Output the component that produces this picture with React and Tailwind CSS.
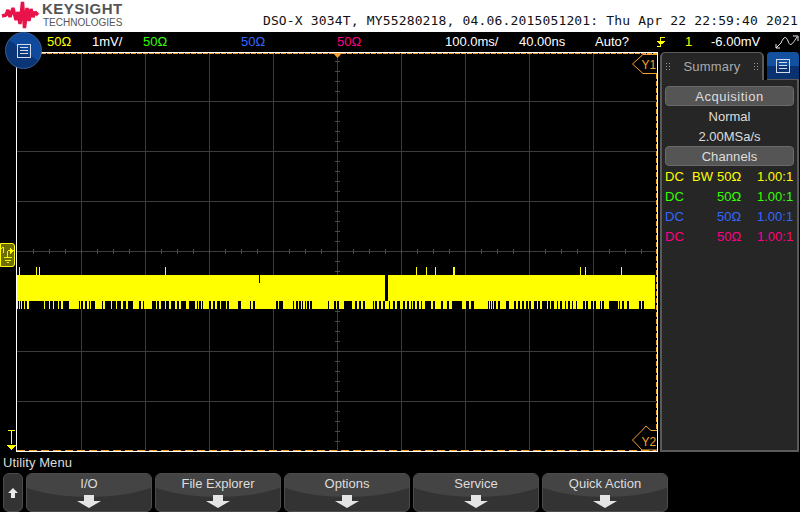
const gapsA = [[5,10],[13,16],[19,24],[28,32],[40,85],[88,98],[103,110],[113,127],[130,135],[140,160],[190,193],[196,202],[206,214],[218,222],[226,238],[258,262],[266,285],[289,300],[304,315],[320,330],[336,352],[370,374],[380,385],[408,420],[423,430],[434,446],[450,460],[464,478],[482,490],[494,510],[518,538],[542,546],[550,554],[558,562],[580,585],[590,598],[602,612],[616,630],[634,640]];
const gapsB = [[24,34],[60,64],[70,76],[138,143],[148,158],[190,193],[197,203],[208,213],[216,220],[224,228],[232,236],[240,245],[295,298],[312,318],[322,328],[342,350],[352,366],[376,382],[388,392],[398,406],[428,432],[436,442],[448,454],[458,464],[476,480],[490,496],[502,510],[518,524],[530,536],[542,546],[550,556],[560,568],[572,576],[586,602],[610,614],[632,640]];
const gapsC = [[-69,-63],[-54,-24],[-12,-3],[3,12],[54,57],[60,63],[66,69],[72,78],[84,90],[108,117],[132,138],[144,150],[156,162],[168,174],[178,183],[192,201],[204,210],[216,231],[234,240],[243,252],[262,264],[270,276],[285,288],[294,300],[306,309],[318,321],[339,345],[348,354],[363,369],[372,378],[390,393],[396,402],[417,444],[447,450],[456,462],[471,477],[507,513],[516,522]];

const toReal = (list, x0) => list.map(([a, b]) => [x0 + a / 3, (b - a) / 3]);
const gaps = [...toReal(gapsA, 16), ...toReal(gapsB, 230), ...toReal(gapsC, 470)];
const spikes = [[19,1],[36,1],[39,1],[165,1],[416,1],[426,1],[435,1],[453,2],[580,1],[585,1],[621,1]];
const vLines = [81,145,209,273,337,401,465,529,593];
const hLines = [101,151,201,251,301,351,401];
const xTicks = Array.from({ length: 39 }, (_, i) => 33 + i * 16);
const yTicks = Array.from({ length: 39 }, (_, i) => 61 + i * 10);

function Plot() {
  return (
    <svg width="642" height="400" viewBox="16 52 642 400" shapeRendering="crispEdges" className="block">
      {vLines.map((x) => <rect key={x} x={x} y="52" width="1" height="399" fill="#3c3c3c" />)}
      {hLines.map((y) => <rect key={y} x="17" y={y} width="640" height="1" fill="#3c3c3c" />)}
      {xTicks.map((x) => <rect key={x} x={x} y="249" width="1" height="5" fill="#4a4a4a" />)}
      {yTicks.map((y) => <rect key={y} x="335" y={y} width="5" height="1" fill="#4a4a4a" />)}

      {/* trace */}
      <rect x="17" y="275" width="638" height="34" fill="#ffff00" />
      {gaps.map(([x, w], i) => <rect key={i} x={x} y="301" width={w} height="8" fill="#000" />)}
      {spikes.map(([x, w]) => <rect key={x} x={x} y="267" width={w} height="8" fill="#ffff00" />)}
      <rect x="385" y="275" width="3" height="26" fill="#000" />
      <rect x="259" y="275" width="1" height="8" fill="#000" />

      {/* frame */}
      <rect x="16" y="52" width="642" height="1" fill="#fff" />
      <rect x="16" y="451" width="642" height="1" fill="#fff" />
      <rect x="16" y="52" width="1" height="400" fill="#fff" />
      <rect x="657" y="52" width="1" height="400" fill="#fff" />
      <line x1="17" y1="53.5" x2="656" y2="53.5" stroke="#f7a030" strokeDasharray="5 1" />
      <line x1="17" y1="450.5" x2="656" y2="450.5" stroke="#f7a030" strokeDasharray="8 4" />
      <line x1="656.5" y1="53" x2="656.5" y2="450" stroke="#f7a030" strokeDasharray="5 2" />

      {/* time reference */}
      <polygon points="333,53 342,53 337.5,58" fill="#f7a030" shapeRendering="auto" />

      {/* Y cursors */}
      <g shapeRendering="auto" fill="none" stroke="#f7a030">
        <path d="M657 54.5 H643 L632.5 64 L643 73.5 H657" fill="#000" />
        <path d="M657 430.5 H651 L646 426 L642 430.5 L632.5 440 L642 450 H657" fill="#000" />
      </g>
      <text x="641.5" y="69" fontSize="12" fill="#f7a030" fontFamily="Liberation Sans, sans-serif">Y1</text>
      <text x="641.5" y="446" fontSize="12" fill="#f7a030" fontFamily="Liberation Sans, sans-serif">Y2</text>
    </svg>
  );
}

function Logo() {
  return (
    <svg width="38" height="30" viewBox="0 0 38 30" className="shrink-0">
      <path d="M1 16 L5 15 L7 10 L9 17 L12 8 L15 20 L17 12 L19 24 L21.5 2 L23.5 28 L26 8 L28 21 L30 9 L32 17 L34 12 L37 15" fill="none" stroke="#e8134b" strokeWidth="3.4" strokeLinejoin="bevel" />
    </svg>
  );
}

function MenuGlyph() {
  return (
    <svg width="14" height="14" viewBox="0 0 14 14" shapeRendering="crispEdges">
      <rect x="0.5" y="0.5" width="13" height="13" fill="none" stroke="#d4dbe8" />
      <rect x="3" y="3" width="8" height="1" fill="#d4dbe8" />
      <rect x="3" y="6" width="8" height="1" fill="#d4dbe8" />
      <rect x="3" y="9" width="8" height="1" fill="#d4dbe8" />
    </svg>
  );
}

function Grip() {
  return (
    <svg width="4" height="8" viewBox="0 0 4 8" shapeRendering="crispEdges">
      {[0, 3, 6].map((y) => (
        <g key={y} fill="#9a9a9a">
          <rect x="0" y={y} width="1" height="1" />
          <rect x="3" y={y} width="1" height="1" />
        </g>
      ))}
    </svg>
  );
}

function SoftKey({ label }) {
  return (
    <div className="relative w-[126px] h-[39px] rounded-[6px] border border-[#4c4c4c] bg-[#333333] overflow-hidden">
      <div className="absolute -left-4 -right-4 -top-6 h-[47px] rounded-b-[50%] bg-[#444444]" />
      <div className="relative text-center text-[13px] leading-[19px] text-[#dddddd]">{label}</div>
      <svg width="26" height="13" viewBox="0 0 26 13" className="absolute left-[49px] top-[21px]">
        <path d="M8 0 H18 V6 H25 L13 13 L1 6 H8 Z" fill="#e4e4e4" />
      </svg>
    </div>
  );
}

const rows = [
  { color: "text-[#ffff00]", bw: "BW" },
  { color: "text-[#33ff00]", bw: "" },
  { color: "text-[#3366ff]", bw: "" },
  { color: "text-[#ff0080]", bw: "" },
];

export default function App() {
  return (
    <div className="relative w-[800px] h-[512px] bg-black overflow-hidden font-['Liberation_Sans',sans-serif]">
      {/* header */}
      <div className="h-8 bg-white flex items-start pl-[1px] pr-[2px]">
        <Logo />
        <div className="ml-[3px] pt-[1px] text-[#555555]">
          <div className="text-[15px] leading-[16px] font-bold tracking-[0.5px]">KEYSIGHT</div>
          <div className="text-[10px] leading-[10px] mt-[1px] ml-[1px]">TECHNOLOGIES</div>
        </div>
        <div className="ml-auto mt-[12px] font-['DejaVu_Sans_Mono',monospace] text-[13px] leading-[18px] tracking-[0.16px] text-[#111] whitespace-pre">
          DSO-X 3034T, MY55280218, 04.06.2015051201: Thu Apr 22 22:59:40 2021
        </div>
      </div>

      {/* channel / timebase strip */}
      <div className="h-5 flex items-center text-[13px] leading-5 whitespace-pre pl-[47px] text-white">
        <span className="w-[45px] text-[#ffff00]">50Ω</span>
        <span className="w-[51px]">1mV/</span>
        <span className="w-[98px] text-[#33ff00]">50Ω</span>
        <span className="w-[96px] text-[#3366ff]">50Ω</span>
        <span className="w-[108px] text-[#ff0080]">50Ω</span>
        <span className="w-[74px]">100.0ms/</span>
        <span className="w-[76px]">40.00ns</span>
        <span className="w-[62px]">Auto?</span>
        <svg width="8" height="12" viewBox="0 0 8 12" className="shrink-0" shapeRendering="crispEdges">
          <path d="M0 10 H3 V1 H8 V2 H4 V11 H0 Z M0 5 H8 V6 H7 V7 H6 V8 H2 V7 H1 V6 H0 Z" fill="#ffff00" />
        </svg>
        <span className="w-[26px] ml-[20px] text-[#ffff00]">1</span>
        <span className="w-[64px]">-6.00mV</span>
        <svg width="24" height="14" viewBox="0 0 24 14" className="shrink-0">
          <path d="M1 13 L6 8 M6 8 C9 1 11 1 13 6 C15 12 17 10 22 2 M18 1 H23 V6 M1 9 V13 H5" fill="none" stroke="#eeeeee" strokeWidth="1" />
        </svg>
      </div>

      {/* main row */}
      <div className="h-[400px] flex">
        <div className="w-4 shrink-0" />
        <Plot />
        <div className="ml-[2px] w-[139px] flex flex-col">
          <div className="h-[28px] flex">
            <div className="w-[104px] h-[28px] rounded-t-[5px] border-x-2 border-t border-[#5a5a5a] border-b-0 bg-[#262626] flex items-center justify-between px-[4px]">
              <Grip />
              <span className="text-[13px] tracking-[0.2px] text-[#aaaaaa]">Summary</span>
              <Grip />
            </div>
            <div className="ml-[3px] w-[32px] h-[28px] rounded-t-[4px] overflow-hidden relative flex items-center justify-center bg-[linear-gradient(#1450a0_0,#1450a0_50%,#0b3270_50%,#0b3270_100%)] border-b border-[#5a5a5a]">
              <MenuGlyph />
            </div>
          </div>
          <div className="flex-1 bg-[#262626] border-x-2 border-b-2 border-[#5a5a5a] px-[3px] pt-[6px] text-[13px] leading-[22px] text-[#dddddd]">
            <div className="h-5 rounded-[4px] bg-[#555555] border border-[#6a6a6a] text-center leading-[20px] tracking-[0.5px]">Acquisition</div>
            <div className="h-5 text-center">Normal</div>
            <div className="h-5 text-center">2.00MSa/s</div>
            <div className="h-5 rounded-[4px] bg-[#555555] border border-[#6a6a6a] text-center leading-[20px] tracking-[0.1px]">Channels</div>
            {rows.map((r, i) => (
              <div key={i} className={`h-5 flex ${r.color}`}>
                <span className="w-[27px]">DC</span>
                <span className="w-[25px]">{r.bw}</span>
                <span className="w-[40px]">50Ω</span>
                <span>1.00:1</span>
              </div>
            ))}
          </div>
        </div>
      </div>

      {/* softkeys */}
      <div className="h-[21px] pl-[3px] text-[13px] leading-[22px] tracking-[0.1px] text-[#dddddd]">Utility Menu</div>
      <div className="flex gap-[3px] pl-[3px]">
        <div className="w-[20px] h-[39px] rounded-[6px] border border-[#4c4c4c] bg-[#333333] flex items-center justify-center">
          <svg width="12" height="12" viewBox="0 0 12 12">
            <path d="M6 1 L11 6 H8 V11 H4 V6 H1 Z" fill="#e8e8e8" />
          </svg>
        </div>
        <SoftKey label="I/O" />
        <SoftKey label="File Explorer" />
        <SoftKey label="Options" />
        <SoftKey label="Service" />
        <SoftKey label="Quick Action" />
      </div>

      {/* overlays */}
      <div className="absolute left-[5px] top-[32px] w-[37px] h-[37px] rounded-full border border-[#3c5f95] bg-[linear-gradient(35deg,#0a3576_0,#0a3576_50%,#0f4a9c_50%,#0f4a9c_100%)] flex items-center justify-center">
        <MenuGlyph />
      </div>
      <div className="absolute left-0 top-[243px] w-[15px] h-[24px] rounded-r-[3px] border border-[#ffff00] bg-[#6e6e00] flex items-center justify-center">
        <svg width="14" height="20" viewBox="0 0 14 20" fill="none" stroke="#ffff00" strokeWidth="1" shapeRendering="crispEdges">
          <path d="M1 3 L2.5 1 V8 M7.5 5.5 V13 M3 13 H12 M4 15.5 H11 M6 18 H9 M7.5 5.5 H10" />
          <path d="M10 2 L14 5.5 L10 9 Z" fill="#ffff00" stroke="none" />
        </svg>
      </div>
      <div className="absolute left-[6px] top-[430px] w-[11px] h-[21px]">
        <svg width="11" height="21" viewBox="0 0 11 21" shapeRendering="crispEdges">
          <path d="M2 0.5 H9 M5.5 0 V14" stroke="#ffff00" fill="none" />
          <path d="M1 15 H10 L5.5 20 Z" fill="#ffff00" />
        </svg>
      </div>
    </div>
  );
}
